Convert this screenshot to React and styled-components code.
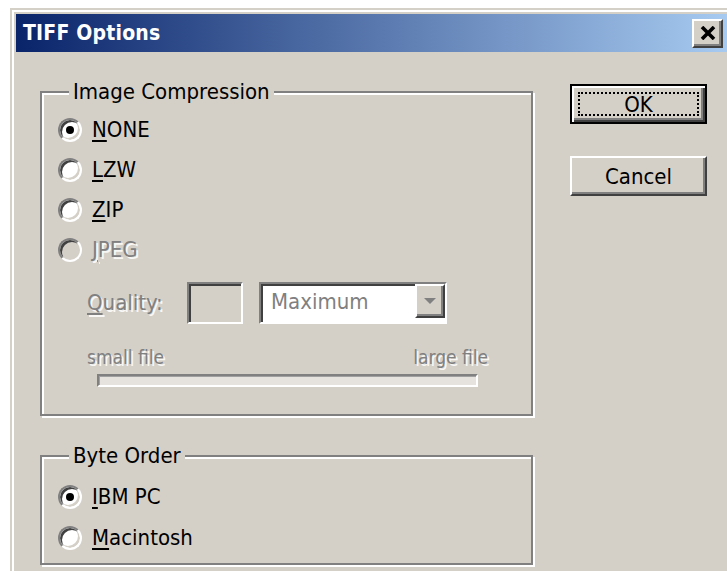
import React from "react";
import styled, { createGlobalStyle, css } from "styled-components";

const FONT = `"DejaVu Sans Condensed", "DejaVu Sans", "Liberation Sans", sans-serif`;
const FACE = "#d4d0c8";
const SHADOW = "#808080";
const DARK = "#404040";

const GlobalStyle = createGlobalStyle`
  html, body {
    margin: 0;
    padding: 0;
    background: #fff;
    overflow: hidden;
  }
  body {
    width: 727px;
    height: 571px;
    font-family: ${FONT};
  }
`;

const Window = styled.div`
  box-sizing: border-box;
  width: 717px;
  height: 563px;
  margin: 8px 0 0 10px;
  padding: 4px 0 0 4px;
  background: ${FACE};
  border-top: 2px solid ${FACE};
  border-left: 2px solid ${FACE};
  box-shadow: inset 2px 2px 0 #fff;
  display: flex;
  flex-direction: column;
  overflow: hidden;
`;

const TitleBar = styled.div`
  flex: none;
  height: 38px;
  display: flex;
  align-items: center;
  justify-content: space-between;
  padding: 0 4px 0 7px;
  background: linear-gradient(to right, #0a246a, #a6caf0);
`;

const Title = styled.span`
  color: #fff;
  font-weight: bold;
  font-size: 21px;
  letter-spacing: 0.2px;
`;

const raised = css`
  background: ${FACE};
  border-style: solid;
  border-width: 2px;
  border-color: #fff ${DARK} ${DARK} #fff;
  box-shadow: inset -2px -2px 0 ${SHADOW};
`;

const sunken = css`
  border-style: solid;
  border-width: 2px;
  border-color: ${SHADOW} #fff #fff ${SHADOW};
  box-shadow: inset 2px 2px 0 ${DARK};
`;

const CloseButton = styled.div`
  box-sizing: border-box;
  width: 31px;
  height: 29px;
  display: flex;
  align-items: center;
  justify-content: center;
  ${raised}
`;

const Body = styled.div`
  display: flex;
  padding: 27px 0 0 24px;
  gap: 37px;
`;

const LeftColumn = styled.div`
  display: flex;
  flex-direction: column;
  gap: 27px;
  width: 493px;
`;

const Group = styled.fieldset`
  box-sizing: border-box;
  margin: 0;
  padding: 0;
  min-width: 0;
  width: 493px;
  border: 2px solid ${SHADOW};
  box-shadow: inset 2px 2px 0 #fff, 2px 2px 0 #fff;
`;

const Legend = styled.legend`
  margin-left: 27px;
  padding: 0 4px;
  font-size: 22px;
  line-height: 26px;
  color: #000;
  background: ${FACE};
`;

const GroupContent = styled.div`
  display: flex;
  flex-direction: column;
  padding: ${({ $top }) => $top}px 0 ${({ $bottom }) => $bottom}px 16px;
`;

const RadioRow = styled.label`
  display: flex;
  align-items: center;
  gap: 10px;
  height: ${({ $h }) => $h || 40}px;
`;

const RadioDot = styled.span`
  position: relative;
  box-sizing: border-box;
  width: 24px;
  height: 24px;
  border-radius: 50%;
  border: 2px solid;
  border-color: ${SHADOW} #fff #fff ${SHADOW};
  background: ${({ $disabled }) => ($disabled ? FACE : "#fff")};
  box-shadow: inset 2px 2px 0 ${DARK}, inset -2px -2px 0 ${FACE};
  flex: none;

  ${({ $checked }) =>
    $checked &&
    css`
      &::after {
        content: "";
        position: absolute;
        left: 6px;
        top: 6px;
        width: 8px;
        height: 8px;
        border-radius: 50%;
        background: #000;
      }
    `}
`;

const disabledText = css`
  color: ${SHADOW};
  text-shadow: 2px 2px 0 rgba(255, 255, 255, 0.85);
`;

const Text = styled.span`
  font-size: 22px;
  line-height: 26px;
  color: #000;
  ${({ $disabled }) => $disabled && disabledText}

  u {
    text-decoration-thickness: 2px;
    text-underline-offset: 3px;
  }
`;

const QualityRow = styled.div`
  display: flex;
  align-items: center;
  margin: 12px 0 0 29px;
  height: 42px;
`;

const QualityLabel = styled(Text)`
  width: 100px;
`;

const EditBox = styled.div`
  box-sizing: border-box;
  width: 56px;
  height: 42px;
  background: ${FACE};
  ${sunken}
`;

const Select = styled.div`
  box-sizing: border-box;
  width: 188px;
  height: 42px;
  margin-left: 16px;
  display: flex;
  background: #fff;
  ${sunken}
`;

const SelectValue = styled.span`
  flex: 1;
  padding-left: 10px;
  font-size: 22px;
  line-height: 36px;
  color: ${SHADOW};
`;

const ArrowButton = styled.div`
  box-sizing: border-box;
  width: 30px;
  height: 34px;
  display: flex;
  align-items: center;
  justify-content: center;
  ${raised}
`;

const RangeLabels = styled.div`
  display: flex;
  justify-content: space-between;
  width: 401px;
  margin: 21px 0 0 29px;
  font-size: 19px;
  line-height: 24px;
  ${disabledText}
`;

const Track = styled.div`
  box-sizing: border-box;
  width: 381px;
  height: 13px;
  margin: 5px 0 0 39px;
  background: #e6e3de;
  border: 2px solid;
  border-color: ${SHADOW} #fff #fff ${SHADOW};
  box-shadow: inset 1px 1px 0 #a0a0a0;
`;

const ButtonColumn = styled.div`
  display: flex;
  flex-direction: column;
  gap: 32px;
  padding-top: 5px;
`;

const Button = styled.div`
  box-sizing: border-box;
  width: 137px;
  height: 40px;
  display: flex;
  align-items: center;
  justify-content: center;
  font-size: 22px;
  color: #000;
  ${raised}

  ${({ $default }) =>
    $default &&
    css`
      border: 2px solid #000;
      box-shadow: inset 2px 2px 0 #fff, inset -2px -2px 0 ${DARK},
        inset -4px -4px 0 ${SHADOW};
    `}
`;

const FocusRect = styled.span`
  box-sizing: border-box;
  display: flex;
  align-items: center;
  justify-content: center;
  width: calc(100% - 12px);
  height: calc(100% - 12px);
  border: 2px dotted #000;
`;

const Radio = ({ checked, disabled, height, children }) => (
  <RadioRow $h={height}>
    <RadioDot $checked={checked} $disabled={disabled} />
    <Text $disabled={disabled}>{children}</Text>
  </RadioRow>
);

const CloseGlyph = () => (
  <svg width="16" height="14" viewBox="0 0 16 14">
    <path d="M2 1 L14 13 M14 1 L2 13" stroke="#000" strokeWidth="3.6" />
  </svg>
);

const DownArrow = () => (
  <svg width="12" height="7" viewBox="0 0 12 7">
    <path d="M0 0 H12 L6 6 Z" fill={SHADOW} />
  </svg>
);

export default function App() {
  return (
    <>
      <GlobalStyle />
      <Window>
        <TitleBar>
          <Title>TIFF Options</Title>
          <CloseButton>
            <CloseGlyph />
          </CloseButton>
        </TitleBar>
        <Body>
          <LeftColumn>
            <Group>
              <Legend>Image Compression</Legend>
              <GroupContent $top={5} $bottom={27}>
                <Radio checked>
                  <u>N</u>ONE
                </Radio>
                <Radio>
                  <u>L</u>ZW
                </Radio>
                <Radio>
                  <u>Z</u>IP
                </Radio>
                <Radio disabled>
                  <u>J</u>PEG
                </Radio>
                <QualityRow>
                  <QualityLabel $disabled>
                    <u>Q</u>uality:
                  </QualityLabel>
                  <EditBox />
                  <Select>
                    <SelectValue>Maximum</SelectValue>
                    <ArrowButton>
                      <DownArrow />
                    </ArrowButton>
                  </Select>
                </QualityRow>
                <RangeLabels>
                  <span>small file</span>
                  <span>large file</span>
                </RangeLabels>
                <Track />
              </GroupContent>
            </Group>
            <Group>
              <Legend>Byte Order</Legend>
              <GroupContent $top={7} $bottom={5}>
                <Radio checked height={41}>
                  <u>I</u>BM PC
                </Radio>
                <Radio height={41}>
                  <u>M</u>acintosh
                </Radio>
              </GroupContent>
            </Group>
          </LeftColumn>
          <ButtonColumn>
            <Button $default>
              <FocusRect>OK</FocusRect>
            </Button>
            <Button>Cancel</Button>
          </ButtonColumn>
        </Body>
      </Window>
    </>
  );
}
